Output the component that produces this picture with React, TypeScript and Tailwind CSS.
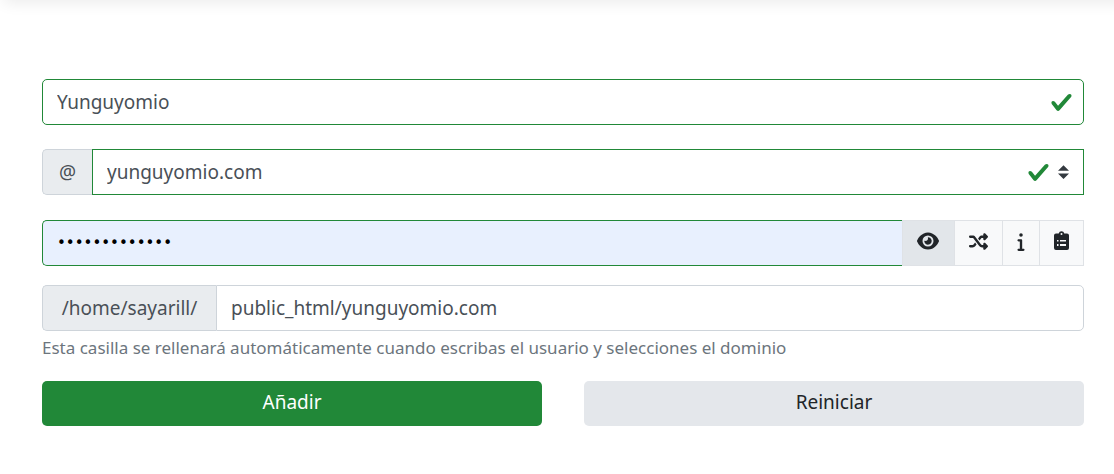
import { useState } from "react";
import type { ReactNode } from "react";
import { FaEye, FaInfo, FaShuffle } from "react-icons/fa6";

function CheckMark({ className = "" }: { className?: string }) {
  return (
    <svg viewBox="0 0 8 8" className={`pointer-events-none absolute top-3 size-[23px] ${className}`} aria-hidden="true">
      <path
        fill="#218838"
        d="M2.3 6.73L.6 4.53c-.4-1.04.46-1.4 1.1-.8l1.1 1.4 3.4-3.8c.6-.63 1.6-.27 1.2.7l-4 4.6c-.43.5-.8.4-1.1.1z"
      />
    </svg>
  );
}

function ClipboardIcon() {
  return (
    <svg viewBox="0 0 15 20" className="h-5 w-[15px]" aria-hidden="true">
      <path
        fill="currentColor"
        fillRule="evenodd"
        d="M2 2.5H4.7A2.9 2.9 0 0 1 10.3 2.5H13A2 2 0 0 1 15 4.5V17A2 2 0 0 1 13 19H2A2 2 0 0 1 0 17V4.5A2 2 0 0 1 2 2.5ZM7.5 2A1 1 0 1 0 7.5 4A1 1 0 1 0 7.5 2ZM3 9V10.5H4.5V9ZM6 9V10.5H12V9ZM3 13V15H4.5V13ZM6 13V15H12V13Z"
      />
    </svg>
  );
}

function ToolButton({
  label,
  className = "bg-[#f8f9fa] px-[14px]",
  onClick,
  children,
}: {
  label: string;
  className?: string;
  onClick?: () => void;
  children: ReactNode;
}) {
  return (
    <button
      type="button"
      aria-label={label}
      onClick={onClick}
      className={`-ml-px flex items-center justify-center border border-[#dfe2e6] pb-1 text-[#212529] ${className}`}
    >
      {children}
    </button>
  );
}

export default function App() {
  const [visible, setVisible] = useState(false);

  return (
    <main className="bg-white font-['Noto_Sans',sans-serif] text-[19px] text-[#495057]">
      <div className="h-4 overflow-hidden">
        <div className="-mt-4 -mr-4 ml-1 h-4 shadow-[0_2px_16px_rgba(0,0,0,0.09)]" />
      </div>
      <form className="pt-[63px] pr-[30px] pb-12 pl-[42px]">
        <div className="relative">
          <input
            aria-label="Usuario"
            defaultValue="Yunguyomio"
            className="h-[46px] w-full rounded-[5px] border border-[#218838] bg-white pr-12 pl-[14px] outline-none"
          />
          <CheckMark className="right-[11px]" />
        </div>

        <div className="mt-6 flex h-[46px]">
          <label
            htmlFor="domain"
            className="flex min-w-[50px] items-center justify-center rounded-l-[5px] border border-r-0 border-[#ced4da] bg-[#e9ecef] px-[14px]"
          >
            @
          </label>
          <div className="relative min-w-0 flex-1">
            <select
              id="domain"
              aria-label="Dominio"
              className="h-full w-full appearance-none border border-[#218838] bg-white pr-16 pl-[14px] outline-none"
            >
              <option>yunguyomio.com</option>
            </select>
            <CheckMark className="right-[34px]" />
            <svg
              viewBox="0 0 4 5"
              className="pointer-events-none absolute top-4 right-[15px] h-[14px] w-[11px]"
              aria-hidden="true"
            >
              <path fill="#343a40" d="M2 0L0 2h4zm0 5L0 3h4z" />
            </svg>
          </div>
        </div>

        <div className="mt-[25px] flex h-[46px]">
          <input
            type={visible ? "text" : "password"}
            aria-label="Contraseña"
            defaultValue="contrasena123"
            className="min-w-0 flex-1 rounded-l-[5px] border border-r-0 border-[#218838] bg-[#e8f0fe] px-[14px] font-['DejaVu_Sans',sans-serif] text-[15px] text-black outline-none"
          />
          <ToolButton
            label="Mostrar contraseña"
            className="bg-[#e2e6ea] pr-[15px] pl-[14px]"
            onClick={() => setVisible(!visible)}
          >
            <FaEye className="h-[22px] w-[22px]" />
          </ToolButton>
          <ToolButton label="Generar contraseña">
            <FaShuffle className="h-[19px] w-[19px]" />
          </ToolButton>
          <ToolButton label="Información">
            <FaInfo className="h-[19px] w-2" />
          </ToolButton>
          <ToolButton label="Copiar al portapapeles">
            <ClipboardIcon />
          </ToolButton>
        </div>

        <div className="mt-[19px] flex h-[46px]">
          <label
            htmlFor="path"
            className="flex min-w-[174px] items-center justify-center rounded-l-[5px] border border-r-0 border-[#ced4da] bg-[#e9ecef] px-[14px]"
          >
            /home/sayarill/
          </label>
          <input
            id="path"
            defaultValue="public_html/yunguyomio.com"
            className="min-w-0 flex-1 rounded-r-[5px] border border-[#ced4da] bg-white px-[14px] outline-none"
          />
        </div>
        <p className="mt-[5px] text-[17px] leading-6 text-[#6c757d]">
          Esta casilla se rellenará automáticamente cuando escribas el usuario y selecciones el dominio
        </p>

        <div className="mt-[21px] grid grid-cols-2 gap-[42px]">
          <button type="submit" className="h-[45px] rounded-[5px] bg-[#218838] pb-0.5 text-white">
            Añadir
          </button>
          <button type="reset" className="h-[45px] rounded-[5px] bg-[#e4e7eb] pb-0.5 text-[#212529]">
            Reiniciar
          </button>
        </div>
      </form>
    </main>
  );
}
